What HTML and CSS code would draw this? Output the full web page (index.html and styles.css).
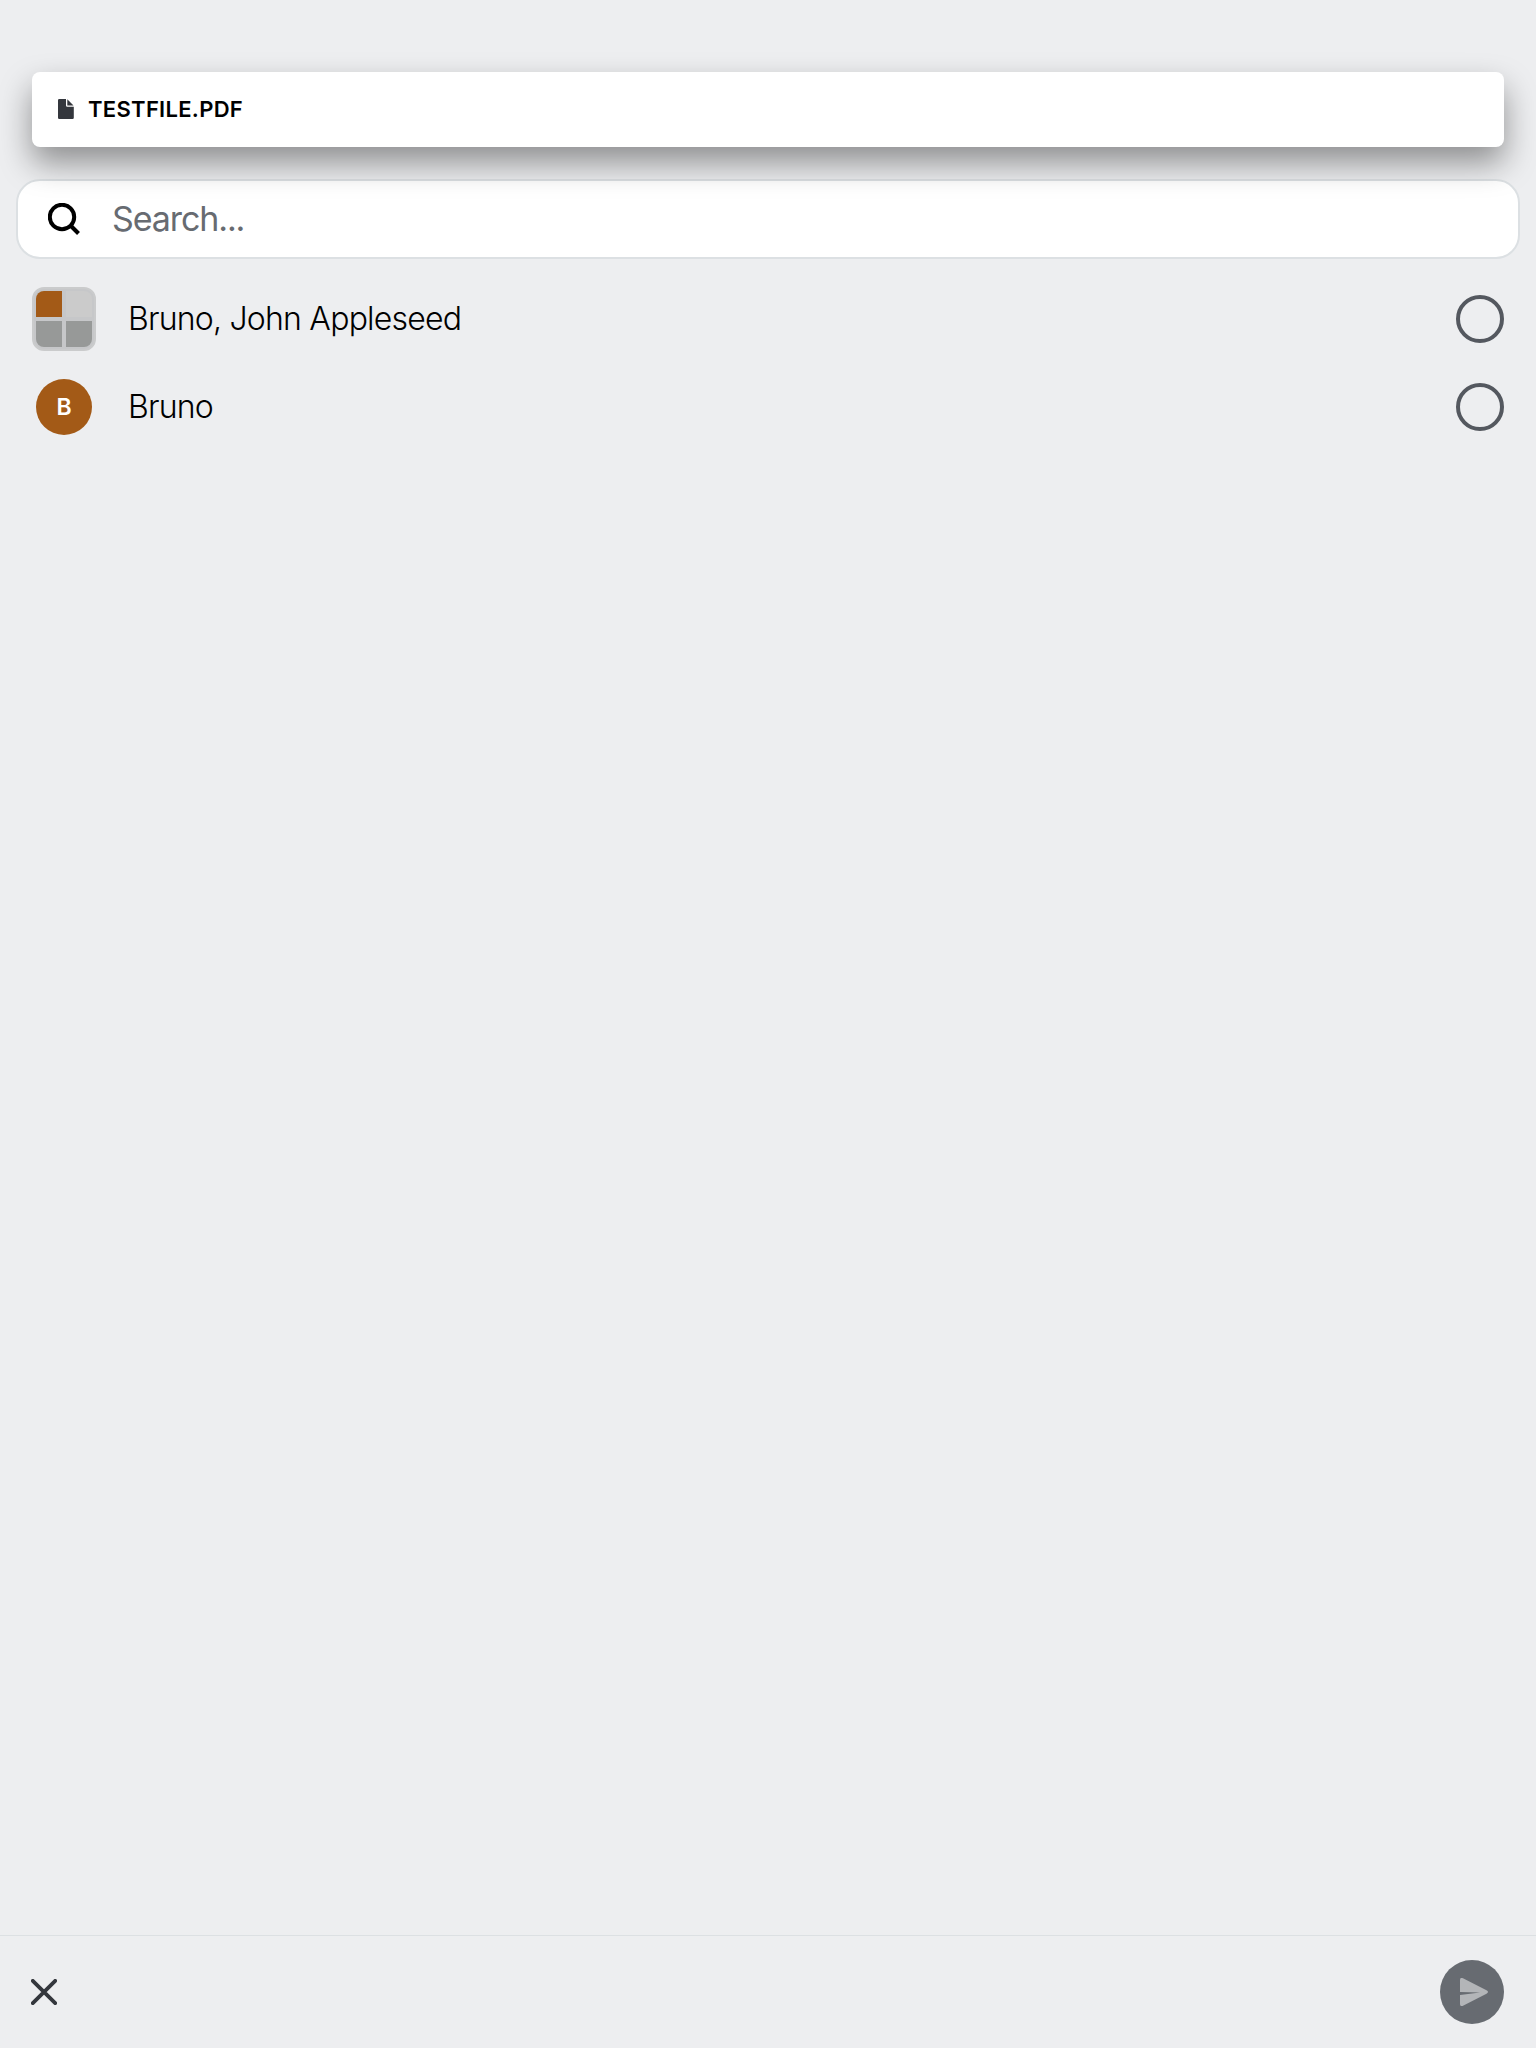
FILE: index.html
```html
<!DOCTYPE html>
<html lang="en">
<head>
<meta charset="utf-8">
<title>Share</title>
<link rel="stylesheet" href="styles.css">
</head>
<body>
<main class="share">
  <section class="file-card">
    <svg class="file-icon" width="16" height="20" viewBox="0 0 16 20"><path d="M1.200 0H8v6.500Q8 7.800 9.300 7.800H15.800V18.800A1.200 1.200 0 0 1 14.600 20H1.200A1.200 1.200 0 0 1 0 18.800V1.200A1.200 1.200 0 0 1 1.200 0ZM9.300 .2l6.200 6.200H9.300Z"/></svg>
    <span class="file-name">TESTFILE.PDF</span>
  </section>
  <label class="search">
    <svg class="search-icon" width="32" height="32" viewBox="0 0 32 32"><circle cx="14" cy="14" r="12.200"/><path d="M22.500 22.500l8 8"/></svg>
    <span class="placeholder">Search...</span>
  </label>
  <ul class="conversations">
    <li class="row">
      <div class="avatar group"><i class="tile user"></i><i class="tile light"></i><i class="tile"></i><i class="tile"></i></div>
      <span class="name">Bruno, John Appleseed</span>
      <span class="radio"></span>
    </li>
    <li class="row">
      <div class="avatar single"><span class="initial">B</span></div>
      <span class="name">Bruno</span>
      <span class="radio"></span>
    </li>
  </ul>
  <footer class="actions">
    <svg class="close" width="26" height="26" viewBox="0 0 26 26"><path d="M1.800 1.800l22.400 22.400M24.200 1.800L1.800 24.200"/></svg>
    <div class="send"><svg width="28" height="28" viewBox="0 0 28 28"><path d="M0 14V2Q0-1 3 .3L26.500 12.300Q29.500 14 26.500 15.700L3 27.700Q0 29 0 26V17L20 14.500Z"/></svg></div>
  </footer>
</main>
</body>
</html>
```
FILE: styles.css
```css
* { box-sizing: border-box; }
body {
  margin: 0;
  background: #edeef0;
  color: #000;
  font-family: Inter, "Liberation Sans", sans-serif;
}
.share {
  display: flex;
  flex-direction: column;
  height: 2048px;
  padding-top: 72px;
}
.file-card {
  position: relative;
  z-index: 1;
  display: flex;
  align-items: center;
  height: 75px;
  margin: 0 32px;
  padding: 0 26px 1px;
  border-radius: 8px;
  background: #fff;
  box-shadow: 0 16px 32px rgba(0, 0, 0, .4);
}
.file-icon { fill: #34373d; }
.file-name {
  margin-left: 14px;
  font-size: 22px;
  font-weight: 600;
  letter-spacing: .3px;
}
.search {
  display: flex;
  align-items: center;
  height: 80px;
  margin: 32px 16px 0;
  padding-left: 30px;
  border: 2px solid #dce0e3;
  border-radius: 24px;
  background: #fff;
}
.search-icon {
  fill: none;
  stroke: #000;
  stroke-width: 4;
}
.placeholder {
  margin-left: 32px;
  padding-bottom: 1px;
  color: #676b71;
  font-size: 34px;
  letter-spacing: -1.1px;
}
.conversations {
  margin: 16px 0 0;
  padding: 0;
  list-style: none;
}
.row {
  display: flex;
  align-items: center;
  height: 88px;
  padding: 0 32px;
}
.avatar { flex: none; }
.group {
  display: grid;
  grid-template-columns: 26px 26px;
  gap: 4px;
  width: 64px;
  height: 64px;
  padding: 2px;
  border: 2px solid #cacbcc;
  border-radius: 12px;
  background: #c6c7c9;
}
.tile {
  height: 26px;
  background: #979998;
}
.tile.user { background: #a35a17; }
.tile.light { background: #cbcbcb; }
.tile:nth-child(1) { border-top-left-radius: 8px; }
.tile:nth-child(2) { border-top-right-radius: 8px; }
.tile:nth-child(3) { border-bottom-left-radius: 8px; }
.tile:nth-child(4) { border-bottom-right-radius: 8px; }
.single {
  display: flex;
  align-items: center;
  justify-content: center;
  width: 56px;
  height: 56px;
  margin: 0 4px;
  border-radius: 50%;
  background: #a35a17;
}
.initial {
  color: #fff;
  font-size: 23px;
  font-weight: 600;
}
.name {
  flex: 1;
  margin-left: 32px;
  padding-bottom: 1px;
  font-size: 32px;
  font-weight: 300;
  letter-spacing: -.78px;
}
.radio {
  width: 48px;
  height: 48px;
  border: 4px solid #54585f;
  border-radius: 50%;
}
.actions {
  display: flex;
  align-items: center;
  justify-content: space-between;
  height: 113px;
  margin-top: auto;
  padding: 0 32px 0 31px;
  border-top: 1px solid #dce0e3;
}
.close {
  fill: none;
  stroke: #34373d;
  stroke-width: 3.8;
  stroke-linecap: round;
}
.send {
  display: flex;
  align-items: center;
  width: 64px;
  height: 64px;
  padding-left: 20px;
  border-radius: 50%;
  background: #676b71;
}
.send path { fill: #b3b5b8; }
```
